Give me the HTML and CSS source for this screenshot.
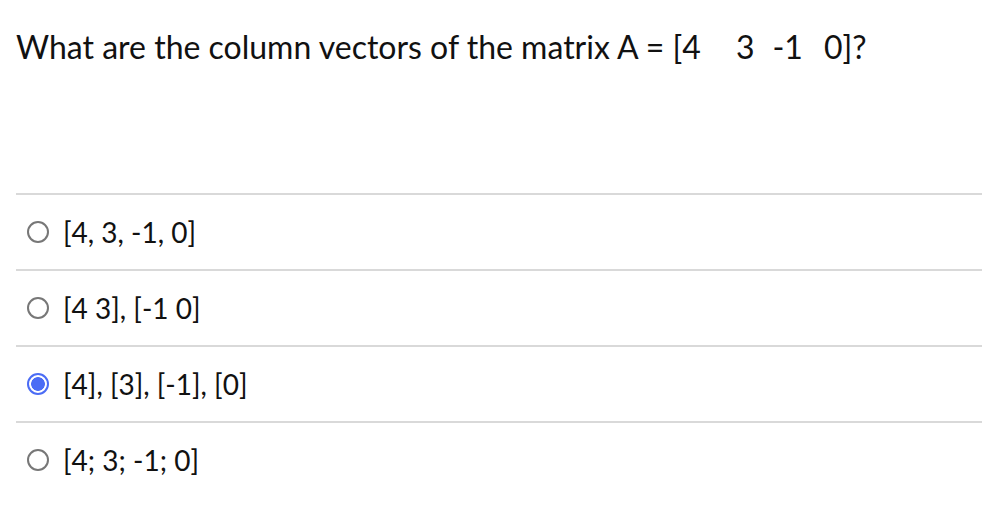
FILE: index.html
```html
<!DOCTYPE html>
<html>
<head>
<meta charset="utf-8">
<link rel="stylesheet" href="styles.css">
</head>
<body>
<div class="question">
  <p class="prompt">What are the column vectors of the matrix A = [4<span class="m m1">3</span><span class="m m2">-1</span><span class="m m3">0</span>]?</p>
  <ul class="options">
    <li class="option"><span class="radio"></span><span class="label">[4, 3, -1, 0]</span></li>
    <li class="option"><span class="radio"></span><span class="label">[4 3], [-1 0]</span></li>
    <li class="option"><span class="radio checked"></span><span class="label">[4], [3], [-1], [0]</span></li>
    <li class="option"><span class="radio"></span><span class="label">[4; 3; -1; 0]</span></li>
  </ul>
</div>
</body>
</html>
```
FILE: styles.css
```css
html, body {
  margin: 0;
  padding: 0;
  background: #fff;
}
body {
  font-family: Lato, "Open Sans", sans-serif;
  color: #111;
}
.question {
  padding-left: 16px;
}
.prompt {
  margin: 28px 0 0 0;
  font-size: 32px;
  line-height: 38px;
}
.m {
  display: inline-block;
}
.m1 { margin-left: 35px; }
.m2 { margin-left: 18px; }
.m3 { margin-left: 21px; }
.options {
  list-style: none;
  margin: 127px 0 0 0;
  padding: 0;
}
.option {
  display: flex;
  align-items: center;
  height: 74px;
  border-top: 2px solid #d9d9d9;
  padding-left: 11px;
}
.radio {
  width: 22px;
  height: 22px;
  box-sizing: border-box;
  border: 2px solid #777;
  border-radius: 50%;
  flex: none;
}
.radio.checked {
  border: 2.5px solid #4b6cf5;
  background: radial-gradient(circle, #4b6cf5 0 6.5px, #fff 7.2px);
}
.label {
  margin-left: 14px;
  font-size: 28px;
  line-height: 34px;
}
```
